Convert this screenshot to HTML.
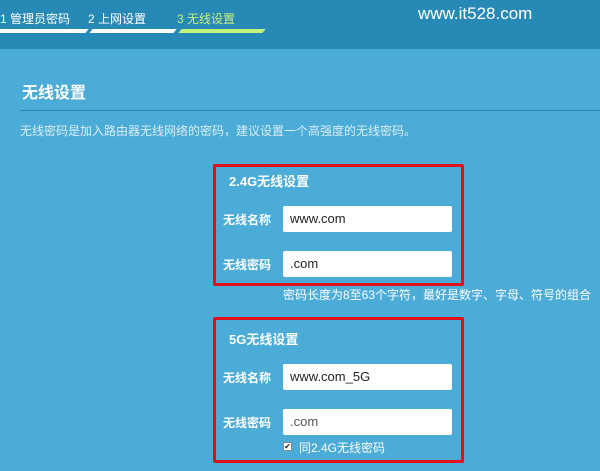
<!DOCTYPE html><html><head><meta charset="utf-8"><style>
*{margin:0;padding:0;box-sizing:border-box}
body{width:600px;height:471px;overflow:hidden;background:#4aacd7;font-family:"Liberation Sans","Noto Sans CJK SC",sans-serif;color:#fff;position:relative}
.hd{position:absolute;left:0;top:0;width:600px;height:49px;background:#2789b5}
.a{position:absolute;white-space:nowrap}
.bar{position:absolute;top:29px;height:4px;background:#fff;transform:skewX(-40deg)}
.box{position:absolute;left:213px;width:251px;border:3px solid #e0101c;border-radius:2px}
.in{position:absolute;left:283px;width:169px;height:26px;background:#fff;border-radius:2px;color:#222;font-size:13px;line-height:26px;padding-left:7px}
.lb{position:absolute;left:223px;font-size:12px;font-weight:bold}
.h{font-size:13px;font-weight:bold}
</style></head><body>
<div class="hd"></div>
<div class="a" style="left:0;top:10px;font-size:12px">1 管理员密码</div>
<div class="a" style="left:88px;top:10px;font-size:12px">2 上网设置</div>
<div class="a" style="left:177px;top:10px;font-size:12px;color:#c8f27a">3 无线设置</div>
<div class="bar" style="left:-5px;width:92px"></div>
<div class="bar" style="left:91px;width:84px"></div>
<div class="bar" style="left:180px;width:84px;background:#c5f27a"></div>
<div class="a" style="left:418px;top:4px;font-size:17px">www.it528.com</div>
<div class="a" style="left:22px;top:79px;font-size:16px;font-weight:bold">无线设置</div>
<div class="a" style="left:20px;top:110px;width:580px;height:1px;background:#2f84b0"></div>
<div class="a" style="left:20px;top:122px;font-size:12px;color:#dcedf6">无线密码是加入路由器无线网络的密码，建议设置一个高强度的无线密码。</div>
<div class="box" style="top:164px;height:122px"></div>
<div class="box" style="top:317px;height:146px"></div>
<div class="a h" style="left:229px;top:171px">2.4G无线设置</div>
<div class="lb" style="top:211px">无线名称</div><div class="in" style="top:206px">www.com</div>
<div class="lb" style="top:256px">无线密码</div><div class="in" style="top:251px">.com</div>
<div class="a" style="left:283px;top:286px;font-size:12px">密码长度为8至63个字符，最好是数字、字母、符号的组合</div>
<div class="a h" style="left:229px;top:329px">5G无线设置</div>
<div class="lb" style="top:369px">无线名称</div><div class="in" style="top:364px">www.com_5G</div>
<div class="lb" style="top:414px">无线密码</div><div class="in" style="top:409px;color:#555">.com</div>
<div class="a" style="left:283px;top:442px;width:9px;height:9px;background:#fff;border:1px solid #888;font-size:8px;color:#222;line-height:8px;text-align:center">✔</div>
<div class="a" style="left:299px;top:439px;font-size:12px">同2.4G无线密码</div>
</body></html>
